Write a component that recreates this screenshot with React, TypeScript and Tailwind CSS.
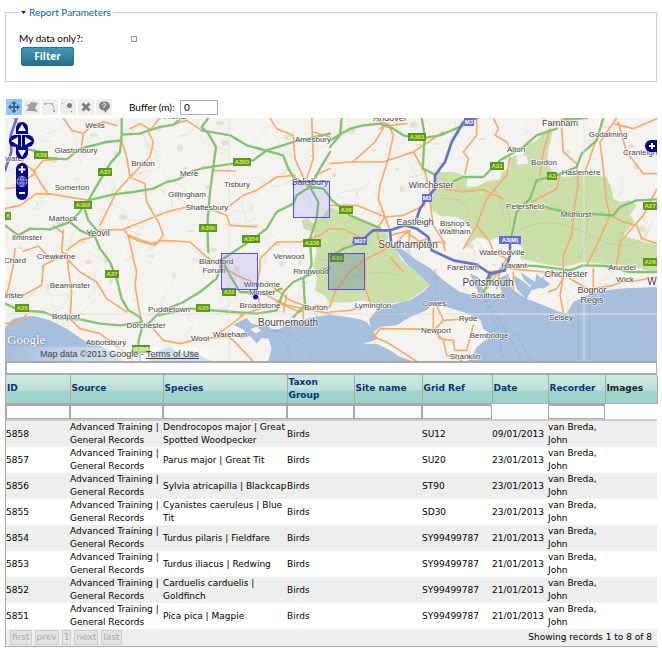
import React from "react";

type Tile = { x: number; y: number; green: string; orange: string; motorway: string };

const tiles: Tile[] = [
  {
    x: 0, y: 92,
    green: "M365,78 L365,130 L360,180 L330,215 L300,265 L265,325 L235,365 L205,392 L150,412 L90,410 L55,430 L15,400 M210,390 L240,415 L285,435 L300,470 L330,510 L350,560 L365,620 L385,655 L420,675 L425,690 M255,355 L265,385 L290,415 M265,325 L340,307 L400,300 L460,290 L500,270 L535,262 L570,240 L610,228 L700,215 L760,205 L800,175 L880,150 L990,125 M85,172 L120,180 L145,198 L200,202 L240,170 L320,150 L365,145 M365,128 L420,125 L455,112 L480,105 L520,98 L545,78 M625,78 L605,105 L625,125 L648,165 L640,225 L630,300 L622,400 L625,480 M605,115 L690,130 L740,160 L850,190 L865,230 L880,255 L930,285 M990,180 L960,230 L930,285 M930,285 L890,310 L880,335 L830,360 L800,410 L760,440 L700,480 L670,500 L650,560 L600,600 L550,630 L480,660 L450,690 L425,710 L415,750 L420,808 M930,285 L955,330 L950,380 L930,440 L935,520 L910,560 L915,640 L880,675 M930,285 L970,290 L990,315 M15,635 L60,655 L130,660 L180,680 L240,682 L300,695 L360,700 L420,692 M475,670 L570,650 L700,660 L770,665 L830,655 L850,600 L880,570 L960,535 L990,528 M665,500 L690,550 L720,600 L800,605 L845,590",
    orange: "M365,145 L380,195 L390,255 L435,275 L440,330 L475,390 L490,430 L465,460 L410,445 L385,430 L370,412 M290,415 L370,412 L450,380 L500,360 L560,345 L640,355 L680,370 L690,400 L770,405 M390,255 L350,300 L330,340 L300,400 M390,255 L450,195 L460,150 L445,120 L480,78 M455,115 L420,95 L390,110 M385,430 L400,500 L410,540 L405,580 L415,640 L425,690 M385,430 L455,455 L490,445 L570,450 L620,495 L660,520 L710,550 L770,575 M15,350 L60,340 L110,305 L145,307 M15,290 L60,285 L80,262 L105,245 M60,205 L100,235 L120,270 L145,305 L268,325 M100,240 L130,205 L190,200 M190,415 L185,480 L200,488 M200,475 L240,445 L290,430 M200,485 L205,530 L215,600 L210,680 L240,710 L300,725 L360,770 L400,805 M190,490 L240,540 L290,570 L320,620 L380,660 M190,490 L130,520 L125,580 L60,615 L15,600 M45,470 L40,520 L20,610 M70,478 L115,462 L150,500 M190,425 L160,400 M190,78 L215,115 L250,125 L245,160 M250,125 L275,100 L310,90 L350,100 M510,100 L560,85 L605,115 M810,78 L830,110 L880,130 L885,200 L920,280 M935,78 L940,200 L920,260 M940,120 L990,135 M640,235 L705,237 M690,340 L730,310 L770,295 L830,255 L885,250 M780,530 L780,500 L830,450 L900,450 L960,430 L990,410 M780,530 L770,580 L780,650 L720,670 M800,570 L870,625 L910,640 L910,680 M780,600 L860,640 L990,665 M860,610 L850,660 M830,630 L900,660 L950,640 L990,645 M735,665 L690,700 L660,720 L700,745 L760,808 M455,705 L490,745 L540,755 L600,740 L680,735 M15,695 L65,690 L80,665 M40,78 L60,100 L55,150 M945,250 L990,230",
    motorway: "M50,78 L32,130 L34,180 L15,235",
  },
  {
    x: 330, y: 92,
    green: "M0,145 L60,110 L100,100 L150,95 L190,110 L220,130 L270,140 L330,130 L400,100 M275,78 L284,130 L278,230 L315,248 M35,78 L30,130 L0,165 M0,320 L60,370 L130,400 L150,408 M0,495 L40,470 L100,450 M370,268 L400,255 L460,255 L510,205 L580,165 L620,130 L680,110 M700,82 L770,78 M820,78 L800,145 L755,185 L740,225 L680,250 L620,265 L600,320 L560,360 L545,430 M645,345 L700,360 L850,370 L870,345 L920,325 L981,322 M490,548 L530,520 L620,522 L720,535 L760,520 L830,522 L900,540 L981,540 M460,600 L485,550",
    orange: "M0,215 L60,210 L160,210 L250,180 L340,120 M150,110 L175,95 L190,130 L175,200 L150,280 L145,320 L165,375 M140,85 L180,100 L230,95 M165,100 L135,150 L70,208 M250,180 L285,240 L300,300 M0,340 L80,340 L165,375 L220,370 L285,340 M165,375 L180,415 M165,375 L140,410 L150,470 M0,410 L40,412 L100,440 M0,640 L20,590 L60,540 L100,505 L190,460 M105,505 L105,590 L125,640 M0,660 L60,655 L110,640 M340,290 L400,300 L460,293 L520,320 M540,195 L530,250 L470,320 L440,400 L400,470 M405,245 L415,200 L400,180 L440,130 L440,78 M490,78 L505,110 L495,130 L530,150 L540,170 M660,110 L640,180 L630,250 M695,110 L700,180 L740,215 L745,280 L735,330 L725,430 L700,490 L700,530 M605,330 L680,290 L690,250 M860,78 L810,150 L820,230 L830,330 L840,370 L800,460 L770,520 M865,90 L890,180 L940,245 L981,245 M840,370 L880,390 L920,400 L935,440 L981,455 M981,290 L940,370 L870,450 L860,520 M800,140 L765,240 M850,95 L910,110 L981,80 M700,100 L660,95 L640,78 M300,330 L310,400 L345,455 M180,430 L240,415 L235,460 L290,440 M200,450 L230,420 L270,450 M290,450 L340,450 L345,475 M440,400 L480,450 L490,480 L530,500 M540,530 L640,540 L700,555 M550,540 L550,600 M530,500 L505,540 L470,590 M470,540 L510,535 L500,590 M700,555 L690,610 L700,660 M720,560 L790,600 M700,560 L680,590 L655,600 M790,530 L790,590 L850,580 L900,560 M900,570 L981,555 M150,710 L310,712 L330,740 M150,710 L130,735 L170,750 L260,808 M310,650 L310,712 L340,745 L350,790 L395,805 M340,742 L370,745 L375,775 L410,775 L430,700 M320,640 L340,685 L430,680 M340,685 L315,712 M180,495 L220,540",
    motorway: "M440,78 L400,90 L365,150 L345,210 L315,250 L315,290 L290,320 L270,350 L258,385 M70,450 L100,440 L130,415 L180,415 L225,400 L260,410 L295,435 L305,475 L370,505 L440,518 L480,545 L525,535 L540,490 L540,440 M180,415 L183,450 M480,545 L470,565",
  },
];

const places: [string, number, number, number][] = [
  ["Wells", 95, 128, 8], ["Glastonbury", 76, 153, 8], ["Bruton", 143, 166, 8], ["Somerton", 72, 190, 8],
  ["Martock", 63, 221, 8], ["Yeovil", 98, 236, 9], ["Ilminster", 27, 240, 8], ["Mere", 189, 176, 8],
  ["Gillingham", 187, 197, 8], ["Shaftesbury", 207, 210, 8], ["water", 15, 161, 8], ["Frome", 175, 119, 8],
  ["Andover", 390, 121, 9], ["Amesbury", 313, 142, 8], ["Tisbury", 237, 187, 8], ["Salisbury", 310, 185, 9],
  ["Winchester", 431, 188, 9], ["Eastleigh", 415, 225, 9], ["Farnham", 560, 126, 9], ["Godalming", 608, 137, 8],
  ["Alton", 516, 152, 8], ["Bordon", 544, 165, 8], ["Haslemere", 581, 175, 8], ["Cranleigh", 640, 155, 8],
  ["Petersfield", 525, 209, 8], ["Midhurst", 576, 217, 8], ["Bishop's", 455, 226, 8], ["Waltham", 455, 234, 8],
  ["Chard", 15, 263, 8], ["Crewkerne", 56, 259, 8], ["Beaminster", 70, 288, 8], ["inster", 14, 298, 8],
  ["Bridport", 66, 319, 8], ["Puddletown", 169, 312, 8], ["Dorchester", 146, 328, 8], ["Abbotsbury", 106, 345, 8],
  ["Wool", 200, 341, 8], ["Blandford", 216, 264, 8], ["Forum", 214, 273, 8], ["Wareham", 230, 337, 8],
  ["Verwood", 289, 259, 8], ["Ringwood", 311, 274, 8], ["Wimborne", 262, 287, 8], ["Minster", 262, 295, 8],
  ["Broadstone", 260, 308, 8], ["Burton", 316, 310, 8], ["Bournemouth", 288, 326, 10], ["Lymington", 373, 308, 8],
  ["Southampton", 408, 248, 10], ["Cowes", 434, 306, 8], ["Newport", 436, 333, 8], ["Waterlooville", 502, 255, 8],
  ["Fareham", 463, 270, 8], ["Havant", 514, 268, 8], ["Portsmouth", 488, 286, 10], ["Southsea", 488, 298, 8],
  ["Chichester", 566, 277, 9], ["Arundel", 622, 270, 8], ["Wick", 625, 282, 8], ["W", 652, 285, 10],
  ["Bognor", 592, 293, 9], ["Regis", 592, 303, 9], ["Selsey", 561, 320, 8], ["Ryde", 468, 321, 8],
  ["Bembridge", 489, 338, 8], ["Shanklin", 465, 359, 8],
];

const shields: [string, number, number, boolean][] = [
  ["A39", 41, 155, false], ["A37", 105, 172, false], ["A303", 83, 205, false], ["8", 8, 216, false],
  ["A350", 208, 228, false], ["A303", 242, 162, false], ["A303", 417, 137, false], ["A36", 346, 210, false],
  ["A354", 251, 239, false], ["A338", 312, 243, false], ["M3", 427, 198, true], ["M27", 360, 241, true],
  ["M3", 469, 122, true], ["A31", 497, 166, false], ["A3", 552, 176, false], ["A27", 650, 206, false],
  ["A3(M)", 510, 240, true], ["A37", 112, 274, false], ["A35", 22, 308, false], ["A35", 203, 308, false],
  ["A354", 141, 349, false], ["A31", 229, 292, false], ["A31", 337, 258, false], ["A28", 650, 262, false],
];

const woods = Array.from({ length: 110 }, (_, i) => ({
  cx: 8 + ((i * 137) % 645),
  cy: 122 + ((i * 71) % 190),
  rx: 1 + (i % 4),
  ry: 1 + (i % 3),
}));

const lanes = Array.from({ length: 150 }, (_, i) => {
  const x = 8 + ((i * 97) % 645);
  const y = 118 + ((i * 53) % 210);
  return `M${x},${y} q${8 - (i % 17)},${10 - (i % 5)} ${14 - (i % 9) * 4},${18 - (i % 7) * 2} t${(i % 11) - 5},${12 - (i % 13)}`;
}).join(" ");

const Roads = ({ kind, color, width }: { kind: "green" | "orange" | "motorway"; color: string; width: number }) => (
  <g fill="none" stroke={color} strokeWidth={width} strokeLinejoin="round" strokeLinecap="round">
    {tiles.map((t) => (
      <path key={`${t.x}-${t.y}`} transform={`translate(${t.x} ${t.y}) scale(0.33333)`} d={t[kind]} />
    ))}
  </g>
);

const WEST = "translate(0 92) scale(0.33333)";
const EAST = "translate(330 92) scale(0.33333)";

const MapDrawing = () => (
  <svg className="block h-full w-full" viewBox="5 118 652 243" preserveAspectRatio="xMidYMid slice" fontFamily="'Liberation Sans', Arial, sans-serif" role="img" aria-label="Map of records">
    <rect x="5" y="118" width="652" height="243" fill="#f4f3ef" />
    <g fill="#dce6d0">
      {woods.map((w, i) => <ellipse key={i} {...w} />)}
    </g>
    <g fill="#cbdfab" transform={EAST}>
      <path d="M-85,385 L-65,378 L-50,395 L-20,370 L0,345 L40,362 L130,400 L175,430 L170,455 L200,475 L215,505 L235,520 L255,510 L270,545 L300,575 L275,600 L230,628 L150,638 L100,625 L70,630 L0,632 L-15,612 L-45,595 L-40,560 L-50,520 L-40,480 L-50,420 L-80,410Z" />
      <path d="M315,240 L370,240 L395,248 L412,258 L410,285 L440,283 L475,268 L510,262 L515,240 L540,230 L535,200 L560,190 L560,218 L595,215 L590,190 L580,190 L590,160 L620,145 L655,112 L668,120 L655,170 L652,215 L672,245 L700,255 L765,250 L830,255 L845,290 L850,320 L870,330 L900,325 L920,340 L900,370 L915,390 L880,430 L940,450 L981,460 L981,540 L880,520 L820,515 L760,510 L700,525 L640,515 L570,500 L580,470 L545,440 L520,430 L480,445 L440,435 L400,475 L430,420 L410,390 L380,375 L330,372 L300,350 L310,300Z" />
    </g>
    <path d={lanes} fill="none" stroke="#dedcd5" strokeWidth="0.6" />
    <g fill="#a5bfdd">
      <g transform={WEST}>
        <path d="M15,705 L40,680 L70,674 L100,672 L150,685 L200,710 L250,745 L310,765 L350,790 L370,808 L15,808Z" />
        <path d="M445,808 L470,778 L510,765 L540,785 L575,775 L610,795 L640,808Z" />
        <path d="M992,668 L940,675 L880,690 L835,712 L805,738 L815,770 L805,808 L992,808Z" />
        <path d="M700,698 L740,678 L755,695 L780,700 L800,698 L815,712 L835,712 L805,740 L785,738 L770,755 L750,732 L720,740 L735,715Z" />
      </g>
      <g transform={EAST}>
        <path d="M-2,668 L50,675 L90,682 L110,690 L122,705 L118,680 L140,655 L180,640 L240,625 L280,600 L300,578 L260,540 L225,510 L200,475 L170,462 L215,470 L260,505 L300,528 L340,565 L390,600 L450,615 L440,590 L430,570 L420,545 L445,555 L460,595 L500,612 L515,600 L505,560 L535,545 L545,590 L585,618 L560,590 L550,550 L575,565 L600,585 L625,565 L660,580 L605,595 L590,620 L640,640 L690,660 L710,665 L730,630 L790,602 L850,592 L900,588 L981,585 L981,808 L-2,808Z" />
        <path d="M572,540 L580,560 L600,580 L640,590 L660,575 L640,560 L650,540 L635,560 L620,545 L615,570Z" />
      </g>
    </g>
    <path transform={EAST} d="M98,757 L145,740 L130,720 L150,705 L200,700 L240,675 L290,655 L305,640 L330,640 L400,660 L450,682 L460,710 L485,730 L460,750 L440,765 L425,795 L410,808 L250,808 L210,795 L180,775 L140,755Z" fill="#f4f3ef" />
    <path transform={EAST} d="M455,560 L490,545 L500,560 L505,605 L480,608 L462,592Z" fill="#f4f3ef" />
    <path transform={WEST} d="M750,712 l20,-8 l14,12 l-16,8Z" fill="#f4f3ef" />
    <path transform={EAST} d="M340,255 q60,60 110,30 t70,80 M330,320 q70,-10 90,40 M620,300 q80,90 200,60 M560,420 q90,-60 220,10 t180,-20 M-40,500 q90,20 170,-60 M10,600 q80,-80 200,-50 M760,300 q30,100 -10,200 M880,420 q-40,60 20,90 M500,300 q60,80 30,120" fill="none" stroke="#b3cb90" strokeWidth="2" />
    <g fill="none" stroke="#8fa9dc" strokeWidth="2.5" strokeDasharray="14 8">
      <path transform={EAST} d="M460,620 L500,700 L520,808 M462,620 L530,720 L575,808 M465,620 L570,745 L605,808 M315,530 L318,600 L312,640" />
      <path transform={WEST} d="M820,715 Q870,750 870,808 M820,712 Q920,740 940,808" />
    </g>
    <Roads kind="orange" color="#f9ab67" width={5} />
    <Roads kind="green" color="#83c471" width={7} />
    <Roads kind="motorway" color="#6674cf" width={8} />
    <path d="M229,118 V361 M5,314 H440" stroke="#dcdad6" strokeWidth="1" opacity="0.6" />
    <path d="M584,118 V361 M440,314 H657" stroke="#e8e5e2" strokeWidth="1" />
    {shields.map(([label, x, y, blue], i) => {
      const w = label.length * 4 + 2;
      return (
        <g key={i}>
          <rect x={x - w / 2} y={y - 4} width={w} height="8" fill={blue ? "#6470cf" : "#549a26"} />
          <text x={x} y={y + 2} textAnchor="middle" fontSize="6" fontWeight="bold" fill={blue ? "#ffffff" : "#ece93a"}>{label}</text>
        </g>
      );
    })}
    <g textAnchor="middle" fill="#444444" stroke="#ffffff" strokeWidth="1.4" strokeOpacity="0.8" strokeLinejoin="round" paintOrder="stroke">
      {places.map(([name, x, y, size]) => <text key={name} x={x} y={y} fontSize={size}>{name}</text>)}
    </g>
    <g fill="#6666ff" fillOpacity="0.15" stroke="#5450e0" strokeWidth="1">
      <rect x="293.5" y="181.5" width="36" height="36" />
      <rect x="221.5" y="253.5" width="36" height="36" />
      <rect x="328.5" y="253.5" width="36" height="36" fill="#5070a0" fillOpacity="0.3" />
    </g>
    <circle cx="255.5" cy="297" r="2.5" fill="#0000f0" />
  </svg>
);

const toolIcons: { name: string; drawing: React.ReactNode }[] = [
  { name: "Pan map", drawing: <path d="M8 2l3 3H9v2h2V5l3 3-3 3V9H9v2h2l-3 3-3-3h2V9H5v2L2 8l3-3v2h2V5H5z" fill="#41647c" /> },
  { name: "Draw polygon", drawing: <path d="M2 6l4-1 1-2 7 1-2 3-1 2 3 4-5-1H2l3-4z" fill="#a0a0a0" /> },
  { name: "Draw line", drawing: <g><path d="M3 4.5h6q3 1 3 7" fill="none" stroke="#bbb" /><path d="M2 4h2v2H2zM9 4h2v2H9zM11 11h2v2h-2z" fill="#aaa" /></g> },
  { name: "Draw point", drawing: <g fill="#808080"><circle cx="9.5" cy="6.5" r="2.5" /><path d="M2 4h1v1H2zM11 12h1v1h-1z" /></g> },
  { name: "Clear", drawing: <path d="M4.5 4.5l7 7M11.5 4.5l-7 7" stroke="#808080" strokeWidth="3" /> },
  { name: "Help", drawing: <g><path d="M8 2.5a5 4.5 0 0 1 3 8.5l-1 3-2-2.5a5 4.5 0 0 1 0-9z" fill="#808080" /><path d="M6 6q2-3 4-1 0 2-2 2v2" fill="none" stroke="#ddd" /></g> },
];

const Toolbar = () => (
  <div className="mt-4 flex h-5 items-center pb-[2px] pl-px">
    <div className="flex gap-[2px]">
      {toolIcons.map((t, i) => (
        <button key={t.name} type="button" aria-label={t.name} className={`h-4 w-4 ${i === 0 ? "bg-[#8fc8f8]" : "bg-[#efefef]"}`}>
          <svg viewBox="0 0 16 16" className="h-4 w-4">{t.drawing}</svg>
        </button>
      ))}
    </div>
    <label htmlFor="buffer" className="ml-[17px] w-[47px] whitespace-nowrap">Buffer (m):</label>
    <input id="buffer" type="text" defaultValue="0" className="ml-1 h-[15px] w-[38px] border border-[#aaa] bg-white px-[3px]" />
  </div>
);

const arrow = "absolute h-3 w-3 bg-[#00008b]";

const MapPanel = () => (
  <div className="relative h-[243px] overflow-hidden">
    <MapDrawing />
    <button type="button" aria-label="Pan up" className={`${arrow} left-[11px] top-1 rounded-t-full`}>
      <svg viewBox="0 0 12 12"><path d="M6 2l4 7H2z" fill="#fff" /></svg>
    </button>
    <button type="button" aria-label="Pan left" className={`${arrow} left-1 top-[17px] rounded-l-full`}>
      <svg viewBox="0 0 12 12"><path d="M2 6l7-4v8z" fill="#fff" /></svg>
    </button>
    <button type="button" aria-label="Pan right" className={`${arrow} left-[17px] top-[17px] rounded-r-full`}>
      <svg viewBox="0 0 12 12"><path d="M10 6L3 2v8z" fill="#fff" /></svg>
    </button>
    <button type="button" aria-label="Pan down" className={`${arrow} left-[11px] top-[29px] rounded-b-full`}>
      <svg viewBox="0 0 12 12"><path d="M6 10l4-7H2z" fill="#fff" /></svg>
    </button>
    <button type="button" aria-label="Zoom in" className={`${arrow} left-[11px] top-[45px] rounded-t-full`}>
      <svg viewBox="0 0 12 12"><path d="M6 3v7M2.5 6.5h7" stroke="#fff" strokeWidth="2" /></svg>
    </button>
    <button type="button" aria-label="Zoom to full extent" className="absolute left-[11px] top-[57px] h-[13px] w-3 bg-[#00008b]">
      <svg viewBox="0 0 12 13"><g fill="none" stroke="#a8a8e4" strokeWidth="0.9"><circle cx="6" cy="6.5" r="5" /><ellipse cx="6" cy="6.5" rx="2" ry="5" /><path d="M1 5h10M1 8h10M6 1.5v10" /></g></svg>
    </button>
    <button type="button" aria-label="Zoom out" className={`${arrow} left-[11px] top-[70px] rounded-b-full`}>
      <svg viewBox="0 0 12 12"><path d="M3 5h6" stroke="#fff" strokeWidth="2" /></svg>
    </button>
    <button type="button" aria-label="Show layers" className="absolute right-0 top-[22px] h-3 w-3 rounded-l-full bg-[#00008b]">
      <svg viewBox="0 0 12 12"><path d="M7 3v6M4 6h6" stroke="#fff" strokeWidth="2" /></svg>
    </button>
    <span className="absolute bottom-[13px] left-[2px] font-['Liberation_Serif',serif] text-[13px] leading-4 text-white [text-shadow:0_0_2px_#667]">Google</span>
    <div className="absolute bottom-0 left-0 w-[206px] whitespace-nowrap bg-gradient-to-r from-white/0 via-white/50 to-white/50 pl-[35px] font-['Liberation_Sans',Arial,sans-serif] text-[9px] leading-[14px] text-[#444]">
      Map data ©2013 Google - <a href="#terms" className="underline">Terms of Use</a>
    </div>
  </div>
);

const columns = [
  { name: "ID", filter: true }, { name: "Source", filter: true }, { name: "Species", filter: true },
  { name: "Taxon Group", filter: true }, { name: "Site name", filter: true }, { name: "Grid Ref", filter: true },
  { name: "Date", filter: false }, { name: "Recorder", filter: true }, { name: "Images", filter: false },
];

const records = [
  ["5858", "Dendrocopos major | Great\nSpotted Woodpecker", "SU12", "09/01/2013"],
  ["5857", "Parus major | Great Tit", "SU20", "23/01/2013"],
  ["5856", "Sylvia atricapilla | Blackcap", "ST90", "23/01/2013"],
  ["5855", "Cyanistes caeruleus | Blue\nTit", "SD30", "23/01/2013"],
  ["5854", "Turdus pilaris | Fieldfare", "SY99499787", "21/01/2013"],
  ["5853", "Turdus iliacus | Redwing", "SY99499787", "21/01/2013"],
  ["5852", "Carduelis carduelis |\nGoldfinch", "SY99499787", "21/01/2013"],
  ["5851", "Pica pica | Magpie", "SY99499787", "21/01/2013"],
];

const RecordsTable = () => (
  <div className="border-b border-l border-[#aaa] font-['DejaVu_Sans',Verdana,sans-serif] text-[9px] leading-[13px] text-black">
    <div className="h-[14px] border-x border-y-2 border-[#aaa] bg-white" />
    <table className="w-full table-fixed border-collapse text-left">
      <colgroup>
        <col className="w-[64px]" /><col className="w-[93px]" /><col className="w-[124px]" />
        <col className="w-[67px]" /><col className="w-[68px]" /><col className="w-[70px]" />
        <col className="w-[56px]" /><col className="w-[57px]" /><col className="w-[52px]" />
      </colgroup>
      <thead>
        <tr className="h-7 bg-gradient-to-b from-[#cce7e2] via-[#bfe0da] via-50% to-[#a0d3cb] to-60%">
          {columns.map((c) => (
            <th key={c.name} scope="col" className="border-b border-r border-[#aaa] py-0 pl-px pr-1 align-middle font-bold">
              {c.name === "Images" ? <span className="text-[#222]">{c.name}</span> : <a href="#sort" className="block text-[#063474]">{c.name}</a>}
            </th>
          ))}
        </tr>
        <tr className="h-[17px] border-b-2 border-[#ccc]">
          {columns.map((c) => (
            <td key={c.name} className="p-0 align-top">
              {c.filter && <input type="text" aria-label={`Filter by ${c.name}`} className="block h-[15px] w-full border border-t-2 border-[#aaa] bg-white px-1" />}
            </td>
          ))}
        </tr>
      </thead>
      <tbody>
        {records.map(([id, species, grid, date]) => (
          <tr key={id} className="h-[26px] whitespace-pre odd:bg-[#eee]">
            <td className="p-0">{id}</td>
            <td className="p-0">{"Advanced Training |\nGeneral Records"}</td>
            <td className="p-0">{species}</td>
            <td className="p-0">Birds</td>
            <td className="p-0" />
            <td className="p-0">{grid}</td>
            <td className="p-0">{date}</td>
            <td className="p-0">{"van Breda,\nJohn"}</td>
            <td className="p-0" />
          </tr>
        ))}
      </tbody>
    </table>
    <div className="flex h-[17px] items-center justify-between bg-[#eee] pl-1 pr-[5px]">
      <div className="flex gap-[3px]">
        {["first", "prev", "1", "next", "last"].map((p) => (
          <button key={p} type="button" disabled className="h-[15px] border border-[#ccc] bg-[#e4e4e4] px-px leading-[13px] text-[#aaa]">{p}</button>
        ))}
      </div>
      <span>Showing records 1 to 8 of 8</span>
    </div>
  </div>
);

export default function App() {
  return (
    <main className="bg-white px-[5px] pb-2 pt-[6px] font-['Lato','Lucida_Grande',sans-serif] text-[10px] leading-[13px] text-black">
      <fieldset className="h-[76px] border border-[#ccc] px-[13px]">
        <legend className="flex items-center gap-[3px] px-[2px]">
          <svg viewBox="0 0 5 3" className="h-[3px] w-[5px]"><path d="M0 0h5L2.5 3z" fill="#222" /></svg>
          <a href="#parameters" className="text-[#0f5f94]">Report Parameters</a>
        </legend>
        <div className="mt-[13px] flex h-[13px] items-center">
          <label htmlFor="mine" className="w-[112px]">My data only?:</label>
          <input id="mine" type="checkbox" className="h-[6px] w-[6px] appearance-none border border-[#999] bg-white" />
        </div>
        <button type="button" className="ml-[2px] mt-[2px] block h-[19px] w-[53px] rounded-[2px] border border-[#2b6f8e] bg-gradient-to-b from-[#4596bb] to-[#256d8c] font-['Open_Sans','Noto_Sans',sans-serif] font-bold text-white">Filter</button>
      </fieldset>
      <Toolbar />
      <MapPanel />
      <RecordsTable />
    </main>
  );
}
